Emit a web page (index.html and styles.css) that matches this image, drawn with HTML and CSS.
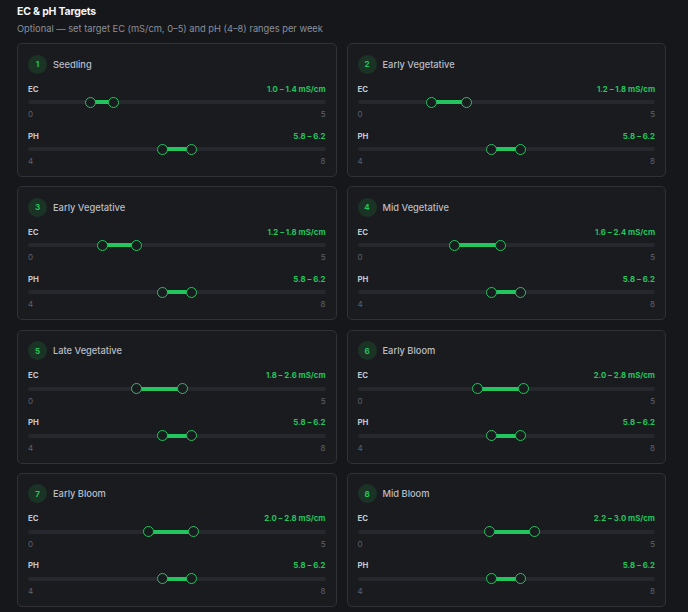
FILE: index.html
```html
<!DOCTYPE html>
<html lang="en">
  <head>
    <meta charset="UTF-8" />
    <meta name="viewport" content="width=device-width, initial-scale=1.0" />
    <title>EC &amp; pH Targets</title>
    <link rel="stylesheet" href="styles.css">
  </head>
  <body>
    <div class="targets">
      <h2 class="targets-title">EC &amp; pH Targets</h2>
      <p class="targets-sub">Optional — set target EC (mS/cm, 0–5) and pH (4–8) ranges per week</p>
      <div class="week-grid" id="weekGrid"></div>
    </div>

    <script>
      const weeks = [
        { name: "Seedling", ec: [1.0, 1.4], ph: [5.8, 6.2] },
        { name: "Early Vegetative", ec: [1.2, 1.8], ph: [5.8, 6.2] },
        { name: "Early Vegetative", ec: [1.2, 1.8], ph: [5.8, 6.2] },
        { name: "Mid Vegetative", ec: [1.6, 2.4], ph: [5.8, 6.2] },
        { name: "Late Vegetative", ec: [1.8, 2.6], ph: [5.8, 6.2] },
        { name: "Early Bloom", ec: [2.0, 2.8], ph: [5.8, 6.2] },
        { name: "Early Bloom", ec: [2.0, 2.8], ph: [5.8, 6.2] },
        { name: "Mid Bloom", ec: [2.2, 3.0], ph: [5.8, 6.2] },
      ];

      // thumb radius, so the thumbs stay inside the track
      const R = 5.5;

      function pos(v, min, max) {
        const f = (v - min) / (max - min);
        return `calc(${R}px + (100% - ${R * 2}px) * ${f})`;
      }

      function slider(label, range, min, max, unit) {
        const lo = range[0].toFixed(1);
        const hi = range[1].toFixed(1);
        const a = pos(range[0], min, max);
        const b = pos(range[1], min, max);
        return `
          <div class="metric">
            <div class="metric-head">
              <span class="metric-label">${label}</span>
              <span class="metric-value">${lo} – ${hi}${unit}</span>
            </div>
            <div class="track">
              <div class="fill" style="left: ${a}; width: calc(${b} - ${a});"></div>
              <div class="thumb" style="left: ${a};"></div>
              <div class="thumb" style="left: ${b};"></div>
            </div>
            <div class="scale"><span>${min}</span><span>${max}</span></div>
          </div>`;
      }

      document.getElementById("weekGrid").innerHTML = weeks
        .map(
          (w, i) => `
          <div class="week-card">
            <div class="week-head">
              <span class="week-num">${i + 1}</span>
              <span class="week-name">${w.name}</span>
            </div>
            ${slider("EC", w.ec, 0, 5, " mS/cm")}
            ${slider("PH", w.ph, 4, 8, "")}
          </div>`
        )
        .join("");
    </script>
  </body>
</html>
```

FILE: styles.css
```css
* {
  margin: 0;
  padding: 0;
  box-sizing: border-box;
}

body {
  font-family: Inter, "Noto Sans", Arial, sans-serif;
  background-color: #16171b;
  color: #c9ccd2;
  min-height: 100vh;
}

.targets {
  padding: 5px 22px 0 17px;
}

.targets-title {
  font-size: 10.5px;
  font-weight: 700;
  color: #f4f5f7;
  letter-spacing: -0.2px;
  line-height: 14px;
}

.targets-sub {
  font-size: 9.3px;
  color: #8a909a;
  margin-top: 3px;
  line-height: 13px;
}

.week-grid {
  display: grid;
  grid-template-columns: 1fr 1fr;
  column-gap: 10px;
  row-gap: 9.3px;
  margin-top: 8px;
}

.week-card {
  background-color: #1a1b1f;
  border: 1px solid #303237;
  border-radius: 5px;
  height: 134px;
  padding: 10px 10px 0 10px;
}

.week-head {
  display: flex;
  align-items: center;
  gap: 6px;
  height: 20px;
}

.week-num {
  width: 19px;
  height: 19px;
  border-radius: 50%;
  background-color: #1b3325;
  color: #22c55e;
  font-size: 8px;
  font-weight: 700;
  display: flex;
  align-items: center;
  justify-content: center;
}

.week-name {
  font-size: 9.3px;
  font-weight: 500;
  color: #b9bec6;
}

.metric {
  margin-top: 8px;
}

.metric + .metric {
  margin-top: 9px;
}

.metric-head {
  display: flex;
  justify-content: space-between;
  align-items: center;
  height: 13px;
}

.metric-label {
  font-size: 7.8px;
  font-weight: 700;
  color: #c3c7ce;
}

.metric-value {
  font-size: 7.8px;
  font-weight: 700;
  color: #22c55e;
}

.track {
  position: relative;
  height: 4px;
  margin-top: 5px;
  border-radius: 2px;
  background-color: #26282d;
}

.fill {
  position: absolute;
  top: 0;
  height: 4px;
  background-color: #22c55e;
}

.thumb {
  position: absolute;
  top: 50%;
  width: 11px;
  height: 11px;
  margin: -5.5px 0 0 -5.5px;
  border: 1.5px solid #22c55e;
  border-radius: 50%;
  background-color: #1a1b1f;
}

.scale {
  display: flex;
  justify-content: space-between;
  font-size: 8px;
  color: #5d626c;
  margin-top: 5px;
  line-height: 11px;
}
```
